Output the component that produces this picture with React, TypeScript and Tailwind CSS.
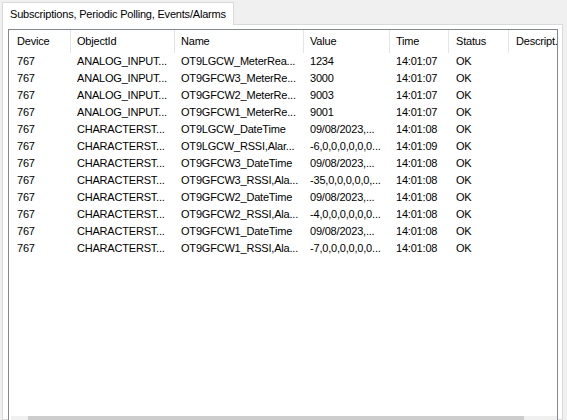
import React from "react";

const cols = [
  { title: "Device", w: "w-[62px]", pl: "pl-[8px]" },
  { title: "ObjectId", w: "w-[104px]", pl: "pl-[6px]" },
  { title: "Name", w: "w-[129px]", pl: "pl-[6px]" },
  { title: "Value", w: "w-[86px]", pl: "pl-[6px]" },
  { title: "Time", w: "w-[59px]", pl: "pl-[6px]" },
  { title: "Status", w: "w-[60px]", pl: "pl-[7px]" },
  { title: "Descript.", w: "flex-1", pl: "pl-[7px]" },
];

const rows: string[][] = [
  ["767", "ANALOG_INPUT...", "OT9LGCW_MeterRea...", "1234", "14:01:07", "OK"],
  ["767", "ANALOG_INPUT...", "OT9GFCW3_MeterRe...", "3000", "14:01:07", "OK"],
  ["767", "ANALOG_INPUT...", "OT9GFCW2_MeterRe...", "9003", "14:01:07", "OK"],
  ["767", "ANALOG_INPUT...", "OT9GFCW1_MeterRe...", "9001", "14:01:07", "OK"],
  ["767", "CHARACTERST...", "OT9LGCW_DateTime", "09/08/2023,...", "14:01:08", "OK"],
  ["767", "CHARACTERST...", "OT9LGCW_RSSI,Alar...", "-6,0,0,0,0,0,0...", "14:01:09", "OK"],
  ["767", "CHARACTERST...", "OT9GFCW3_DateTime", "09/08/2023,...", "14:01:08", "OK"],
  ["767", "CHARACTERST...", "OT9GFCW3_RSSI,Ala...", "-35,0,0,0,0,0,...", "14:01:08", "OK"],
  ["767", "CHARACTERST...", "OT9GFCW2_DateTime", "09/08/2023,...", "14:01:08", "OK"],
  ["767", "CHARACTERST...", "OT9GFCW2_RSSI,Ala...", "-4,0,0,0,0,0,0...", "14:01:08", "OK"],
  ["767", "CHARACTERST...", "OT9GFCW1_DateTime", "09/08/2023,...", "14:01:08", "OK"],
  ["767", "CHARACTERST...", "OT9GFCW1_RSSI,Ala...", "-7,0,0,0,0,0,0...", "14:01:08", "OK"],
];

export default function App() {
  return (
    <div
      className="w-[567px] h-[420px] overflow-hidden bg-[#f0f0f0] text-black text-[11px] tracking-[-0.2px] leading-none pt-[2px] pl-[2px] pr-[4px] flex flex-col"
      style={{ fontFamily: '"Liberation Sans", Arial, sans-serif' }}
    >
      <div className="w-[232px] h-[23px] shrink-0 bg-white border border-[#d9d9d9] border-b-0 flex items-center pl-[7px] whitespace-nowrap relative z-10 -mb-px">
        Subscriptions, Periodic Polling, Events/Alarms
      </div>
      <div className="border border-[#d9d9d9] bg-white pt-[4px] pl-[5px] pr-[4px] flex-1 flex flex-col min-h-0">
        <div className="border border-[#828790] h-[405px] shrink-0 flex flex-col bg-white">
          <div className="flex h-[23px] shrink-0">
            {cols.map((c, i) => (
              <div
                key={c.title}
                className={`${c.w} ${c.pl} shrink-0 flex items-center whitespace-nowrap overflow-hidden ${i < cols.length - 1 ? "border-r border-[#e5e5e5]" : "min-w-0"}`}
              >
                {c.title}
              </div>
            ))}
          </div>
          <div className="flex-1 flex flex-col">
            {rows.map((r, ri) => (
              <div key={ri} className="flex h-[17px]">
                {cols.map((c, i) => (
                  <div
                    key={i}
                    className={`${c.w} ${c.pl} shrink-0 flex items-center whitespace-nowrap overflow-hidden ${i < cols.length - 1 ? "border-r border-transparent" : "min-w-0"}`}
                  >
                    {r[i] ?? ""}
                  </div>
                ))}
              </div>
            ))}
          </div>
          <div className="h-[17px] shrink-0 ml-[2px] bg-[#f0f0f0] flex">
            <div className="w-[17px]" />
            <div className="w-[496px] bg-[#cdcdcd]" />
          </div>
        </div>
      </div>
    </div>
  );
}
